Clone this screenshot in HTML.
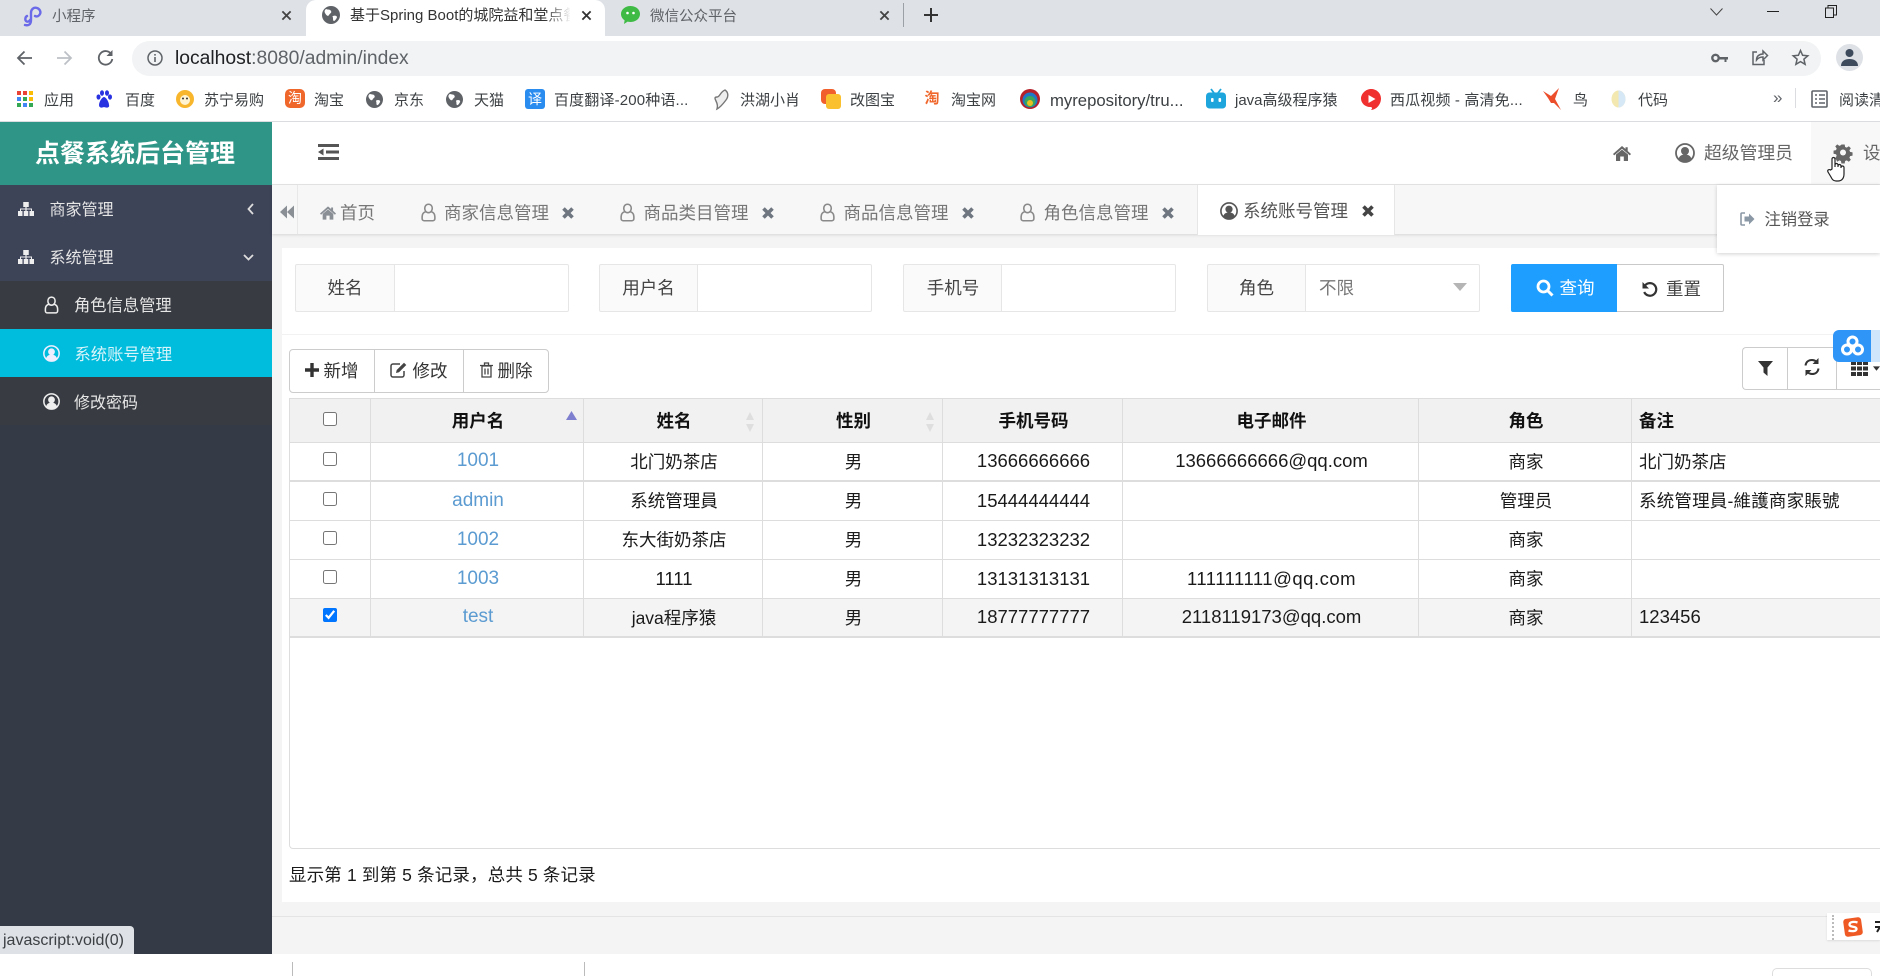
<!DOCTYPE html>
<html lang="zh-CN"><head><meta charset="utf-8"><title>点餐系统后台管理</title>
<style>
html,body{margin:0;padding:0;background:#fff;overflow:hidden;width:1880px;height:976px}
body{position:relative;font-family:"Liberation Sans","Noto Sans CJK SC",sans-serif;color:#222}
.a{position:absolute}
.t{position:absolute;white-space:nowrap;line-height:24px;height:24px}
.c{transform:translateX(-50%)}
svg{position:absolute;overflow:visible}
.bm{font-size:15px;color:#3c4043;top:89px}
.mn{font-size:16px;color:#e6e6e6}
.tb{font-size:17.5px;color:#777;top:201px}
.lb{font-size:17.5px;color:#444;top:276px}
.box{position:absolute;background:#fff;border:1px solid #e6e6e6;border-radius:2px;top:264px;height:46px;box-sizing:content-box}
.lbg{position:absolute;background:#fafafa;border:1px solid #e6e6e6;border-radius:2px 0 0 2px;top:264px;height:46px}
.b{font-size:17.5px;color:#333}
table{position:absolute;left:289px;top:398px;border-collapse:collapse;table-layout:fixed;width:1591px;font-size:17.5px;color:#1a1a1a}
th,td{border-right:1px solid #ddd;border-bottom:1px solid #ddd;text-align:center;padding:0 0 0 2px;overflow:hidden;white-space:nowrap}
th{background:#f1f1f1;height:43px;font-weight:bold;color:#111;border-top:1px solid #ddd;font-size:17.5px}
td{height:37px;padding-bottom:1px;background:#fff}
tr.th2 td{border-bottom:2px solid #ddd;height:36px}
tr.sel td{background:#f4f4f4}
td:first-child,th:first-child{border-left:1px solid #ddd;padding-left:0}
td a{color:#5b9bd1;text-decoration:none;font-size:19px}
td.l,th.l{text-align:left;padding-left:7px}
.n{font-size:18.5px}
input[type=checkbox]{width:14px;height:14px;margin:0 auto;display:block;position:relative;top:-2px;accent-color:#0075ff}
</style></head><body>
<svg width="0" height="0" style="position:absolute"><defs>
<symbol id="globe" viewBox="0 0 18 18"><circle cx="9" cy="9" r="9" fill="#5f6368"/><path d="M4 3c2 1 4 0 5 2s-1 2-2 4-3 0-4-2 0-3 1-4zM11 10c2-1 4 0 4 1s-2 4-3 4-1-2-1-3-1-2 0-2z" fill="#fff"/></symbol>
<symbol id="userO" viewBox="0 0 16 20"><path d="M8 1.2c2.6 0 4 2 4 4.4 0 2.2-1.4 4.6-4 4.6S4 7.800 4 5.600C4 3.200 5.400 1.200 8 1.200zM4.800 9.200C2.500 10 1.200 11.500 1.200 14.500v2c0 1.300.9 2.300 2.300 2.300h9c1.400 0 2.300-1 2.300-2.300v-2c0-3-1.300-4.500-3.600-5.300" fill="none" stroke="currentColor" stroke-width="1.700"/></symbol>
<symbol id="userC" viewBox="0 0 20 20"><circle cx="10" cy="10" r="9" fill="none" stroke="currentColor" stroke-width="1.800"/><circle cx="10" cy="8" r="4" fill="currentColor"/><path d="M3.500 16c1-3.500 3.500-4.500 6.500-4.500s5.500 1 6.500 4.500c-3 3.600-10 3.600-13 0z" fill="currentColor"/></symbol>
<symbol id="map" viewBox="0 0 16 14"><path d="M5.250 0h5.500v5H8.600v1.500H14V9h2v5h-4.500V9H13V7.500H8.600V9H10.250v5h-4.500V9H7.400V7.500H3V9h1.500v5H0V9h2V6.500h5.400V5H5.250z" fill="currentColor"/></symbol>
<symbol id="home" viewBox="0 0 18 15"><path d="M9 0l3.500 3V1.300h2.200V5L18 8l-1.200 1.400L9 2.800 1.200 9.400 0 8zM3 8.500l6-4.900 6 4.900V15h-4.200v-4.500H7.200V15H3z" fill="currentColor"/></symbol>
<symbol id="x" viewBox="0 0 12 12"><path d="M1.500 1.500l9 9M10.500 1.500l-9 9" stroke="currentColor" stroke-width="3.600" fill="none"/></symbol>
<symbol id="sx" viewBox="0 0 12 12"><path d="M1.500 1.500l9 9M10.500 1.500l-9 9" stroke="currentColor" stroke-width="2" fill="none"/></symbol>
<symbol id="sort" viewBox="0 0 10 20"><path d="M5 0l4 8H1zM5 20l-4-8h8z" fill="#dedede"/></symbol>
</defs></svg>

<!-- browser tab strip -->
<div class="a" style="left:0;top:0;width:1880px;height:36px;background:#dee1e6"></div>
<div class="a" style="left:306px;top:0;width:299px;height:36px;background:#fff;border-radius:10px 10px 0 0"></div>
<svg style="left:22px;top:6px" width="20" height="21" viewBox="0 0 20 21"><path d="M3 19c4 1 6-1 6-5V7c0-4 3-6 6-5s4 4 3 6-3 3-5 2M8 14c-1 2-3 2-4 1s-1-4 1-5" fill="none" stroke="#6b6ae8" stroke-width="2.400" stroke-linecap="round"/></svg>
<span class="t" style="left:52px;top:5px;font-size:14.5px;color:#5f6368">小程序</span>
<svg style="left:281px;top:10px;color:#444" width="11" height="11"><use href="#sx" width="11" height="11"/></svg>
<svg style="left:322px;top:6px" width="18" height="18"><use href="#globe" width="18" height="18"/></svg>
<div class="t" style="left:350px;top:4px;width:220px;overflow:hidden;font-size:15px;color:#333">基于Spring Boot的城院益和堂点餐</div>
<div class="a" style="left:545px;top:2px;width:26px;height:30px;background:linear-gradient(90deg,rgba(255,255,255,0),#fff)"></div>
<svg style="left:581px;top:10px;color:#333" width="11" height="11"><use href="#sx" width="11" height="11"/></svg>
<svg style="left:620px;top:5px" width="21" height="20" viewBox="0 0 21 20"><path d="M10.500 1c5.300 0 9.500 3.500 9.500 8s-4.200 8-9.500 8c-1 0-2-.1-2.900-.4L4 19l.6-3.700C2.400 13.800 1 11.600 1 9c0-4.500 4.200-8 9.500-8z" fill="#3fbb45"/><circle cx="7.500" cy="8" r="1.300" fill="#fff"/><circle cx="13.500" cy="8" r="1.300" fill="#fff"/></svg>
<span class="t" style="left:650px;top:5px;font-size:14.5px;color:#5f6368">微信公众平台</span>
<svg style="left:879px;top:10px;color:#444" width="11" height="11"><use href="#sx" width="11" height="11"/></svg>
<div class="a" style="left:903px;top:3px;width:1px;height:24px;background:#9aa0a6"></div>
<svg style="left:924px;top:8px" width="14" height="14" viewBox="0 0 14 14"><path d="M7 0v14M0 7h14" stroke="#333" stroke-width="2"/></svg>
<svg style="left:1710px;top:8px" width="13" height="8" viewBox="0 0 13 8"><path d="M.5.500l6 6.500 6-6.500" fill="none" stroke="#444" stroke-width="1"/></svg>
<div class="a" style="left:1767px;top:11px;width:12px;height:1px;background:#222"></div>
<svg style="left:1825px;top:5px" width="12" height="13" viewBox="0 0 12 13"><path d="M.5 3h8v9.500h-8zM3 3V.500h8.500V10H8.500" fill="none" stroke="#222" stroke-width="1"/></svg>

<!-- omnibox row -->
<div class="a" style="left:0;top:36px;width:1880px;height:46px;background:#fff"></div>
<div class="a" style="left:132px;top:41px;width:1689px;height:35px;background:#f1f3f4;border-radius:18px"></div>
<svg style="left:16px;top:50px" width="17" height="16" viewBox="0 0 17 16"><path d="M16 8H2M8.500 1.500L2 8l6.500 6.500" fill="none" stroke="#5f6368" stroke-width="1.800"/></svg>
<svg style="left:56px;top:50px" width="17" height="16" viewBox="0 0 17 16"><path d="M1 8h14M8.500 1.500L15 8l-6.500 6.500" fill="none" stroke="#bdc1c6" stroke-width="1.800"/></svg>
<svg style="left:97px;top:49px" width="17" height="17" viewBox="0 0 17 17"><path d="M14.500 5.500A6.800 6.800 0 1 0 15.300 10" fill="none" stroke="#5f6368" stroke-width="1.800"/><path d="M15.500 1v6h-6z" fill="#5f6368"/></svg>
<svg style="left:147px;top:50px" width="16" height="16" viewBox="0 0 16 16"><circle cx="8" cy="8" r="7" fill="none" stroke="#5f6368" stroke-width="1.500"/><path d="M8 7v5M8 4v1.600" stroke="#5f6368" stroke-width="1.600"/></svg>
<span class="t" style="left:175px;top:47px;font-size:19.3px;color:#5f6368"><span style="color:#202124">localhost</span>:8080/admin/index</span>
<svg style="left:1711px;top:53px" width="17" height="10" viewBox="0 0 17 10"><circle cx="4.500" cy="5" r="3.200" fill="none" stroke="#5f6368" stroke-width="2.400"/><path d="M8 4h9v2.500h-1.500V9h-2V6.500H8z" fill="#5f6368"/></svg>
<svg style="left:1751px;top:49px" width="17" height="17" viewBox="0 0 17 17"><path d="M6 3H2v12.500h11V11" fill="none" stroke="#5f6368" stroke-width="1.500"/><path d="M5.500 11c0-4 3-6 6.500-6V2l4.500 4.500L12 11V8c-3 0-5 1-6.500 3z" fill="none" stroke="#5f6368" stroke-width="1.500"/></svg>
<svg style="left:1792px;top:49px" width="17" height="17" viewBox="0 0 17 17"><path d="M8.500 1.500l2.100 4.800 5.200.5-3.900 3.400 1.200 5.100-4.600-2.700-4.600 2.700 1.200-5.100L1.200 6.800l5.200-.5z" fill="none" stroke="#5f6368" stroke-width="1.500"/></svg>
<div class="a" style="left:1836px;top:44px;width:27px;height:27px;border-radius:50%;background:#dee1e6"></div>
<svg style="left:1841px;top:48px" width="17" height="19" viewBox="0 0 17 19"><circle cx="8.500" cy="5" r="4" fill="#3c4a5c"/><path d="M0 18c0-5 4-7 8.500-7s8.500 2 8.500 7z" fill="#3c4a5c"/></svg>

<!-- bookmarks -->
<div class="a" style="left:0;top:82px;width:1880px;height:39px;background:#fff"></div>
<div class="a" style="left:0;top:121px;width:1880px;height:1px;background:#dadce0"></div>
<svg style="left:17px;top:91px" width="16" height="16" viewBox="0 0 16 16"><g><rect width="4" height="4" fill="#ea4335"/><rect x="6" width="4" height="4" fill="#ea4335"/><rect x="12" width="4" height="4" fill="#fbbc05"/><rect y="6" width="4" height="4" fill="#4285f4"/><rect x="6" y="6" width="4" height="4" fill="#34a853"/><rect x="12" y="6" width="4" height="4" fill="#fbbc05"/><rect y="12" width="4" height="4" fill="#34a853"/><rect x="6" y="12" width="4" height="4" fill="#4285f4"/><rect x="12" y="12" width="4" height="4" fill="#34a853"/></g></svg>
<span class="t bm" style="left:44px">应用</span>
<svg style="left:96px;top:90px" width="16" height="18" viewBox="0 0 16 18"><g fill="#2932e1"><ellipse cx="2.500" cy="7" rx="2" ry="2.600"/><ellipse cx="6" cy="3" rx="2" ry="2.800"/><ellipse cx="11" cy="3" rx="2" ry="2.800"/><ellipse cx="14" cy="7" rx="2" ry="2.600"/><path d="M8 7c-2 0-5 5-5 8 0 3 3 3 5 2 2 1 6 1 5-2 0-3-3-8-5-8z"/></g></svg>
<span class="t bm" style="left:125px">百度</span>
<svg style="left:175px;top:89px" width="20" height="20" viewBox="0 0 20 20"><circle cx="10" cy="10" r="9" fill="#f8b62c"/><circle cx="10" cy="11" r="5" fill="#fff3d0"/><circle cx="8" cy="9.500" r="1" fill="#333"/><circle cx="12" cy="9.500" r="1" fill="#333"/></svg>
<span class="t bm" style="left:204px">苏宁易购</span>
<div class="a" style="left:285px;top:89px;width:20px;height:19px;background:#f0672c;border-radius:5px;color:#fff;font-size:14px;line-height:19px;text-align:center">淘</div>
<span class="t bm" style="left:314px">淘宝</span>
<svg style="left:366px;top:91px" width="17" height="17"><use href="#globe" width="17" height="17"/></svg>
<span class="t bm" style="left:394px">京东</span>
<svg style="left:446px;top:91px" width="17" height="17"><use href="#globe" width="17" height="17"/></svg>
<span class="t bm" style="left:474px">天猫</span>
<div class="a" style="left:525px;top:89px;width:20px;height:20px;background:#2b8cf0;border-radius:3px;color:#fff;font-size:14px;line-height:20px;text-align:center">译</div>
<span class="t bm" style="left:554px;letter-spacing:.15px">百度翻译-200种语...</span>
<svg style="left:711px;top:89px" width="20" height="21" viewBox="0 0 20 21"><path d="M14 1c3 2 4 6 1 10s-7 8-9 9c1-3 0-6-1-8S3 8 6 8s3-5 8-7z" fill="#eee" stroke="#777" stroke-width="1.400"/></svg>
<span class="t bm" style="left:740px">洪湖小肖</span>
<svg style="left:821px;top:89px" width="20" height="20" viewBox="0 0 20 20"><rect width="15" height="15" rx="4" fill="#f1602c"/><rect x="5" y="5" width="15" height="15" rx="3" fill="#fbc02d"/></svg>
<span class="t bm" style="left:850px">改图宝</span>
<div class="a" style="left:922px;top:89px;width:20px;height:19px;color:#f0672c;font-size:15px;line-height:19px;text-align:center;font-weight:bold">淘</div>
<span class="t bm" style="left:951px">淘宝网</span>
<svg style="left:1020px;top:89px" width="20" height="20" viewBox="0 0 20 20"><circle cx="10" cy="10" r="10" fill="#b5202a"/><circle cx="10" cy="11" r="7.500" fill="#1f78c8"/><circle cx="10" cy="12.500" r="5.500" fill="#3ba55c"/><circle cx="10" cy="14" r="3" fill="#e8c020"/></svg>
<span class="t bm" style="left:1050px;font-size:16.7px">myrepository/tru...</span>
<svg style="left:1206px;top:88px" width="20" height="21" viewBox="0 0 20 21"><path d="M5 1l3 4M15 1l-3 4" stroke="#1da5dc" stroke-width="1.800"/><rect y="4.500" width="20" height="16" rx="3.500" fill="#1da5dc"/><rect x="5" y="10" width="2.600" height="4" rx="1" fill="#fff"/><rect x="12.500" y="10" width="2.600" height="4" rx="1" fill="#fff"/></svg>
<span class="t bm" style="left:1235px">java高级程序猿</span>
<svg style="left:1361px;top:89px" width="20" height="21" viewBox="0 0 20 21"><path d="M10 0c5.500 0 10 4 10 9.500s-4 11-10 11.500c2-2 1-3-1-3-5 0-9-4-9-8.500S4.500 0 10 0z" fill="#f0302f"/><path d="M7.500 6l7 4-7 4z" fill="#fff"/></svg>
<span class="t bm" style="left:1390px;letter-spacing:.15px">西瓜视频 - 高清免...</span>
<svg style="left:1543px;top:88px" width="18" height="22" viewBox="0 0 18 22"><path d="M0 3l8 5 8-8-4 11 6 11-7-7-3 0L5 10z" fill="#ec4d2b"/></svg>
<span class="t bm" style="left:1573px">鸟</span>
<svg style="left:1610px;top:90px" width="17" height="18" viewBox="0 0 17 18"><ellipse cx="8.500" cy="9" rx="7" ry="8.500" fill="#f3e9b0"/><path d="M8.500.500C12 .500 15.500 4 15.500 9s-3.500 8.500-7 8.500z" fill="#d6e7f6"/></svg>
<span class="t bm" style="left:1638px">代码</span>
<span class="t" style="left:1773px;top:86px;font-size:17px;color:#5f6368">»</span>
<div class="a" style="left:1795px;top:88px;width:1px;height:20px;background:#dadce0"></div>
<svg style="left:1811px;top:90px" width="17" height="18" viewBox="0 0 17 18"><rect x="1" y="1" width="15" height="16" rx="1" fill="none" stroke="#5f6368" stroke-width="1.600"/><path d="M4 5h2M8 5h6M4 9h2M8 9h6M4 13h2M8 13h6" stroke="#5f6368" stroke-width="1.400"/></svg>
<span class="t bm" style="left:1839px">阅读清单</span>

<!-- sidebar -->
<div class="a" style="left:0;top:122px;width:272px;height:832px;background:#343a46"></div>
<div class="a" style="left:0;top:122px;width:272px;height:63px;background:#2f9687"></div>
<span class="t c" style="left:135px;top:141px;font-size:25px;font-weight:bold;color:#fff;line-height:26px">点餐系统后台管理</span>
<div class="a" style="left:0;top:185px;width:272px;height:96px;background:#3e4458"></div>
<div class="a" style="left:0;top:281px;width:272px;height:48px;background:#383c42"></div>
<div class="a" style="left:0;top:329px;width:272px;height:48px;background:#00bcdd"></div>
<div class="a" style="left:0;top:377px;width:272px;height:48px;background:#383c42"></div>
<svg style="left:18px;top:202px;color:#eee" width="16" height="14"><use href="#map" width="16" height="14"/></svg>
<span class="t mn" style="left:49.500px;top:198.500px">商家管理</span>
<svg style="left:247px;top:203px" width="7" height="12" viewBox="0 0 7 12"><path d="M6 1L1.500 6 6 11" fill="none" stroke="#ddd" stroke-width="1.800"/></svg>
<svg style="left:18px;top:250px;color:#eee" width="16" height="14"><use href="#map" width="16" height="14"/></svg>
<span class="t mn" style="left:49.500px;top:246.500px">系统管理</span>
<svg style="left:243px;top:254px" width="11" height="7" viewBox="0 0 11 7"><path d="M1 1l4.500 4.500L10 1" fill="none" stroke="#ddd" stroke-width="1.800"/></svg>
<svg style="left:44px;top:296px;color:#eee" width="15" height="18"><use href="#userO" width="15" height="18"/></svg>
<span class="t mn" style="left:74px;top:294px;font-size:16.3px">角色信息管理</span>
<svg style="left:43px;top:345px;color:#eef" width="17" height="17"><use href="#userC" width="17" height="17"/></svg>
<span class="t mn" style="left:74.500px;top:343px;font-size:16.3px;color:#d9f5fa">系统账号管理</span>
<svg style="left:43px;top:393px;color:#eee" width="17" height="17"><use href="#userC" width="17" height="17"/></svg>
<span class="t mn" style="left:74px;top:391.500px">修改密码</span>
<div class="a" style="left:0;top:926px;width:134px;height:28px;background:#dee1e6;border-radius:0 4px 0 0"></div>
<span class="t" style="left:3px;top:929px;font-size:16px;color:#3c4043">javascript:void(0)</span>

<!-- main -->
<div class="a" style="left:272px;top:122px;width:1608px;height:832px;background:#f4f4f4"></div>
<div class="a" style="left:272px;top:122px;width:1608px;height:62px;background:#fff;border-bottom:1px solid #e6e6e6"></div>
<svg style="left:318px;top:144px" width="21" height="16" viewBox="0 0 21 16"><path d="M0 0h21v3H0zM8 6.500h13v3H8zM0 13h21v3H0zM5.500 4.500v7L0 8z" fill="#555"/></svg>
<svg style="left:1613px;top:146px;color:#666" width="18" height="15"><use href="#home" width="18" height="15"/></svg>
<svg style="left:1675px;top:143px;color:#666" width="20" height="20"><use href="#userC" width="20" height="20"/></svg>
<span class="t" style="left:1704px;top:141px;font-size:17.8px;color:#666">超级管理员</span>
<div class="a" style="left:1811px;top:122px;width:69px;height:62px;background:#f8f8f8"></div>
<svg style="left:1834px;top:144px" width="18" height="18" viewBox="0 0 18 18"><path d="M7.300 0h3.400l.5 2.600 1.700.7 2.200-1.500 2.100 2.100-1.500 2.200.7 1.700 2.600.5v3.400l-2.600.5-.7 1.700 1.500 2.200-2.100 2.100-2.200-1.500-1.700.7-.5 2.600H7.300l-.5-2.600-1.700-.7-2.200 1.500L.8 14.200l1.500-2.200-.7-1.700L-1 9.800V6.400l2.600-.5.7-1.700L.8 2 2.900-.1l2.200 1.500 1.700-.7z" transform="translate(.5 .5) scale(.95)" fill="#666"/><circle cx="9" cy="8.500" r="3" fill="#f8f8f8"/></svg>
<span class="t" style="left:1863px;top:141px;font-size:17.5px;color:#666">设置</span>

<!-- tabs -->
<div class="a" style="left:272px;top:185px;width:1608px;height:49px;background:#f7f7f7;box-shadow:0 1px 3px rgba(0,0,0,.12)"></div>
<div class="a" style="left:297px;top:185px;width:1px;height:49px;background:#e8e8e8"></div>
<svg style="left:280px;top:205px" width="14" height="14" viewBox="0 0 14 13"><path d="M7 0v13L0 6.500zM14 0v13L7 6.500z" fill="#8a8f96"/></svg>
<svg style="left:320px;top:206px;color:#8a8f96" width="16" height="14"><use href="#home" width="16" height="14"/></svg>
<span class="t tb" style="left:340px">首页</span>
<svg style="left:421px;top:203px;color:#8a8a8a" width="15" height="19"><use href="#userO" width="15" height="19"/></svg>
<span class="t tb" style="left:444px">商家信息管理</span>
<svg style="left:562px;top:207px;color:#6f7680" width="12" height="12"><use href="#x" width="12" height="12"/></svg>
<svg style="left:620px;top:203px;color:#8a8a8a" width="15" height="19"><use href="#userO" width="15" height="19"/></svg>
<span class="t tb" style="left:643.500px">商品类目管理</span>
<svg style="left:762px;top:207px;color:#6f7680" width="12" height="12"><use href="#x" width="12" height="12"/></svg>
<svg style="left:820px;top:203px;color:#8a8a8a" width="15" height="19"><use href="#userO" width="15" height="19"/></svg>
<span class="t tb" style="left:843.500px">商品信息管理</span>
<svg style="left:962px;top:207px;color:#6f7680" width="12" height="12"><use href="#x" width="12" height="12"/></svg>
<svg style="left:1020px;top:203px;color:#8a8a8a" width="15" height="19"><use href="#userO" width="15" height="19"/></svg>
<span class="t tb" style="left:1043.500px">角色信息管理</span>
<svg style="left:1162px;top:207px;color:#6f7680" width="12" height="12"><use href="#x" width="12" height="12"/></svg>
<div class="a" style="left:1197px;top:185px;width:198px;height:50px;background:#fff;border-left:1px solid #e6e6e6;border-right:1px solid #e6e6e6;box-sizing:border-box"></div>
<svg style="left:1220px;top:202px;color:#555" width="18" height="18"><use href="#userC" width="18" height="18"/></svg>
<span class="t" style="left:1243px;top:199px;font-size:17.5px;color:#555">系统账号管理</span>
<svg style="left:1362px;top:205px;color:#444" width="12" height="12"><use href="#x" width="12" height="12"/></svg>

<!-- content panel -->
<div class="a" style="left:282px;top:248px;width:1598px;height:654px;background:#fff"></div>
<div class="a" style="left:282px;top:334px;width:1598px;height:1px;background:#f2f2f2"></div>
<div class="lbg" style="left:295px;width:98px"></div><div class="box" style="left:394px;width:173px;border-radius:0 2px 2px 0"></div>
<div class="lbg" style="left:599px;width:98px"></div><div class="box" style="left:697px;width:173px;border-radius:0 2px 2px 0"></div>
<div class="lbg" style="left:903px;width:98px"></div><div class="box" style="left:1001px;width:173px;border-radius:0 2px 2px 0"></div>
<div class="lbg" style="left:1207px;width:98px"></div><div class="box" style="left:1305px;width:173px;border-radius:0 2px 2px 0"></div>
<span class="t lb c" style="left:345px">姓名</span>
<span class="t lb c" style="left:648.500px">用户名</span>
<span class="t lb c" style="left:953px">手机号</span>
<span class="t lb c" style="left:1256.500px">角色</span>
<span class="t" style="left:1319px;top:276px;font-size:17.5px;color:#777">不限</span>
<svg style="left:1453px;top:283px" width="14" height="8" viewBox="0 0 14 8"><path d="M0 0h14L7 8z" fill="#b5b5b5"/></svg>
<div class="a" style="left:1511px;top:264px;width:106px;height:48px;background:#1e9fff;border-radius:2px 0 0 2px"></div>
<svg style="left:1536px;top:279px" width="18" height="18" viewBox="0 0 18 18"><circle cx="7.500" cy="7.500" r="5.500" fill="none" stroke="#fff" stroke-width="2.800"/><path d="M11.500 11.500l5 5" stroke="#fff" stroke-width="3"/></svg>
<span class="t" style="left:1559.500px;top:276px;font-size:17.5px;color:#fff">查询</span>
<div class="a" style="left:1617px;top:264px;width:106px;height:46px;background:#fff;border:1px solid #c9c9c9;border-left:0;border-radius:0 2px 2px 0"></div>
<svg style="left:1642px;top:281px" width="16" height="17" viewBox="0 0 16 17"><path d="M3 4.500A6.300 6.300 0 1 1 2.200 11" fill="none" stroke="#333" stroke-width="2.200"/><path d="M.5 1v6.500H7z" fill="#333"/></svg>
<span class="t" style="left:1666px;top:277px;font-size:17.5px;color:#444">重置</span>

<!-- toolbar -->
<div class="a" style="left:289px;top:349px;width:258px;height:42px;border:1px solid #ccc;border-radius:4px;background:#fff"></div>
<div class="a" style="left:374px;top:349px;width:1px;height:43px;background:#ccc"></div>
<div class="a" style="left:463px;top:349px;width:1px;height:43px;background:#ccc"></div>
<svg style="left:305px;top:363px" width="14" height="14" viewBox="0 0 14 14"><path d="M7 0v14M0 7h14" stroke="#333" stroke-width="3.400"/></svg>
<span class="t b" style="left:323.500px;top:359px">新增</span>
<svg style="left:390px;top:362px" width="17" height="16" viewBox="0 0 17 16"><path d="M10 2H3a2 2 0 0 0-2 2v9a2 2 0 0 0 2 2h9a2 2 0 0 0 2-2V9" fill="none" stroke="#444" stroke-width="1.500"/><path d="M6 11l.7-3L14 .700l2.300 2.300L9 10.300z" fill="#444"/></svg>
<span class="t b" style="left:412.500px;top:359px">修改</span>
<svg style="left:480px;top:362px" width="13" height="16" viewBox="0 0 13 16"><path d="M2 4h9v11H2zM0 3.500h13M4.500 3V1h4v2M5 6.500v6M8 6.500v6" fill="none" stroke="#444" stroke-width="1.300"/></svg>
<span class="t b" style="left:497.500px;top:359px">删除</span>
<div class="a" style="left:1742px;top:347px;width:138px;height:41px;border:1px solid #ccc;border-right:0;border-radius:4px 0 0 4px;background:#fff"></div>
<div class="a" style="left:1787px;top:347px;width:1px;height:42px;background:#ccc"></div>
<div class="a" style="left:1836px;top:347px;width:1px;height:42px;background:#ccc"></div>
<svg style="left:1758px;top:361px" width="15" height="15" viewBox="0 0 15 15"><path d="M0 0h15L9.500 6.500V15L5.500 11.500V6.500z" fill="#333"/></svg>
<svg style="left:1804px;top:358px" width="16" height="18" viewBox="0 0 16 18"><path d="M1.500 7.500C2 4 4.500 2 8 2c2 0 3.500.800 5 2M14.500 10.500C14 14 11.500 16 8 16c-2 0-3.500-.800-5-2" fill="none" stroke="#333" stroke-width="2"/><path d="M14.500 0v6h-6zM1.500 18v-6h6z" fill="#333"/></svg>
<svg style="left:1851px;top:361px" width="17" height="15" viewBox="0 0 17 15"><g fill="#333"><rect width="5" height="4"/><rect x="6" width="5" height="4"/><rect x="12" width="5" height="4"/><rect y="5.500" width="5" height="4"/><rect x="6" y="5.500" width="5" height="4"/><rect x="12" y="5.500" width="5" height="4"/><rect y="11" width="5" height="4"/><rect x="6" y="11" width="5" height="4"/><rect x="12" y="11" width="5" height="4"/></g></svg>
<svg style="left:1873px;top:366px" width="7" height="5" viewBox="0 0 8 5"><path d="M0 0h8L4 5z" fill="#333"/></svg>

<!-- table -->
<div class="a" style="left:289px;top:398px;width:1591px;height:449px;border:1px solid #ddd;border-right:0;border-radius:4px 0 0 4px;background:#fff"></div>
<table>
<colgroup><col style="width:81px"><col style="width:213px"><col style="width:179px"><col style="width:180px"><col style="width:180px"><col style="width:296px"><col style="width:213px"><col style="width:249px"></colgroup>
<tr><th><input type="checkbox"></th><th>用户名</th><th>姓名</th><th>性别</th><th>手机号码</th><th>电子邮件</th><th>角色</th><th class="l">备注</th></tr>
<tr class="th2"><td><input type="checkbox"></td><td><a href="#">1001</a></td><td>北门奶茶店</td><td>男</td><td class="n">13666666666</td><td class="n">13666666666@qq.com</td><td>商家</td><td class="l">北门奶茶店</td></tr>
<tr><td><input type="checkbox"></td><td><a href="#">admin</a></td><td>系统管理員</td><td>男</td><td class="n">15444444444</td><td></td><td>管理员</td><td class="l" style="letter-spacing:.2px">系统管理員-維護商家賬號</td></tr>
<tr><td><input type="checkbox"></td><td><a href="#">1002</a></td><td>东大街奶茶店</td><td>男</td><td class="n">13232323232</td><td></td><td>商家</td><td class="l"></td></tr>
<tr><td><input type="checkbox"></td><td><a href="#">1003</a></td><td class="n">1111</td><td>男</td><td class="n">13131313131</td><td class="n" style="letter-spacing:.5px">111111111@qq.com</td><td>商家</td><td class="l"></td></tr>
<tr class="sel th2"><td><input type="checkbox" checked></td><td><a href="#">test</a></td><td>java程序猿</td><td>男</td><td class="n">18777777777</td><td class="n">2118119173@qq.com</td><td>商家</td><td class="l n">123456</td></tr>
</table>
<svg style="left:566px;top:411px" width="11" height="9" viewBox="0 0 11 9"><path d="M5.500 0L11 9H0z" fill="#7f7fd0"/></svg>
<svg style="left:745px;top:412px" width="10" height="20"><use href="#sort" width="10" height="20"/></svg>
<svg style="left:925px;top:412px" width="10" height="20"><use href="#sort" width="10" height="20"/></svg>
<span class="t" style="left:289px;top:863px;font-size:17.500px;color:#1a1a1a;letter-spacing:.15px">显示第 1 到第 5 条记录，总共 5 条记录</span>

<!-- dropdown -->
<div class="a" style="left:1717px;top:185px;width:163px;height:68px;background:#fff;box-shadow:0 1px 4px rgba(0,0,0,.18)"></div>
<svg style="left:1740px;top:212px" width="15" height="14" viewBox="0 0 15 14"><path d="M5 1H2a1 1 0 0 0-1 1v10a1 1 0 0 0 1 1h3" fill="none" stroke="#8a97a5" stroke-width="1.600"/><path d="M4.500 4.500H9V1.500L14.500 7 9 12.500v-3H4.500z" fill="#8a97a5"/></svg>
<span class="t" style="left:1764.500px;top:208px;font-size:16.300px;color:#555">注销登录</span>

<!-- main footer -->
<div class="a" style="left:272px;top:916px;width:1608px;height:1px;background:#e4e4e4"></div>

<!-- baidu float -->
<div class="a" style="left:1833px;top:330px;width:47px;height:32px;background:#2f95f7;border-radius:6px 0 0 6px"></div>
<div class="a" style="left:1871px;top:330px;width:9px;height:32px;background:#cfe6fb"></div>
<svg style="left:1841px;top:335px" width="23" height="21" viewBox="0 0 23 21"><g fill="none" stroke="#fff" stroke-width="3"><circle cx="11.500" cy="6.500" r="4.500"/><circle cx="6" cy="14.500" r="4.500"/><circle cx="17" cy="14.500" r="4.500"/></g></svg>

<!-- sogou -->
<div class="a" style="left:1827px;top:913px;width:53px;height:27px;background:#fff;box-shadow:0 1px 2px rgba(0,0,0,.1)"></div>
<div class="a" style="left:1832px;top:915px;height:25px;border-left:2px dotted #bbb"></div>
<svg style="left:1842px;top:916px" width="22" height="22" viewBox="0 0 22 22"><rect x="2" y="2" width="18" height="18" rx="3" transform="rotate(-8 11 11)" fill="#ef5a24"/><path d="M15.500 6.500c-3-1-8-1-8 2 0 3 7 1.500 7 4.500 0 2.500-5 2.500-8 1.500" fill="none" stroke="#fff" stroke-width="2.300"/></svg>
<svg style="left:1875px;top:921px" width="5" height="12" viewBox="0 0 5 12"><path d="M0 1h5M0 6h5L2 11" stroke="#222" stroke-width="2" fill="none"/></svg>

<!-- bottom strip -->
<div class="a" style="left:0;top:954px;width:1880px;height:22px;background:#fff"></div>
<div class="a" style="left:292px;top:962px;width:1px;height:14px;background:#bbb"></div>
<div class="a" style="left:584px;top:962px;width:1px;height:14px;background:#bbb"></div>
<div class="a" style="left:1772px;top:968px;width:98px;height:7px;border:1px solid #ddd;border-bottom:0;border-radius:5px 5px 0 0"></div>

<!-- cursor -->
<svg style="left:1826px;top:156px" width="20" height="26" viewBox="0 0 20 26"><path d="M6 13V3a1.500 1.500 0 0 1 3 0v8-2a1.500 1.500 0 0 1 3 0v2-1a1.500 1.500 0 0 1 3 0v2-.5a1.500 1.500 0 0 1 3 0V18c0 4-2 7-6 7H10c-3 0-4-2-5-4l-3-5c-1-2 1-3 2.500-2z" fill="#fff" stroke="#222" stroke-width="1.200"/></svg>
</body></html>
